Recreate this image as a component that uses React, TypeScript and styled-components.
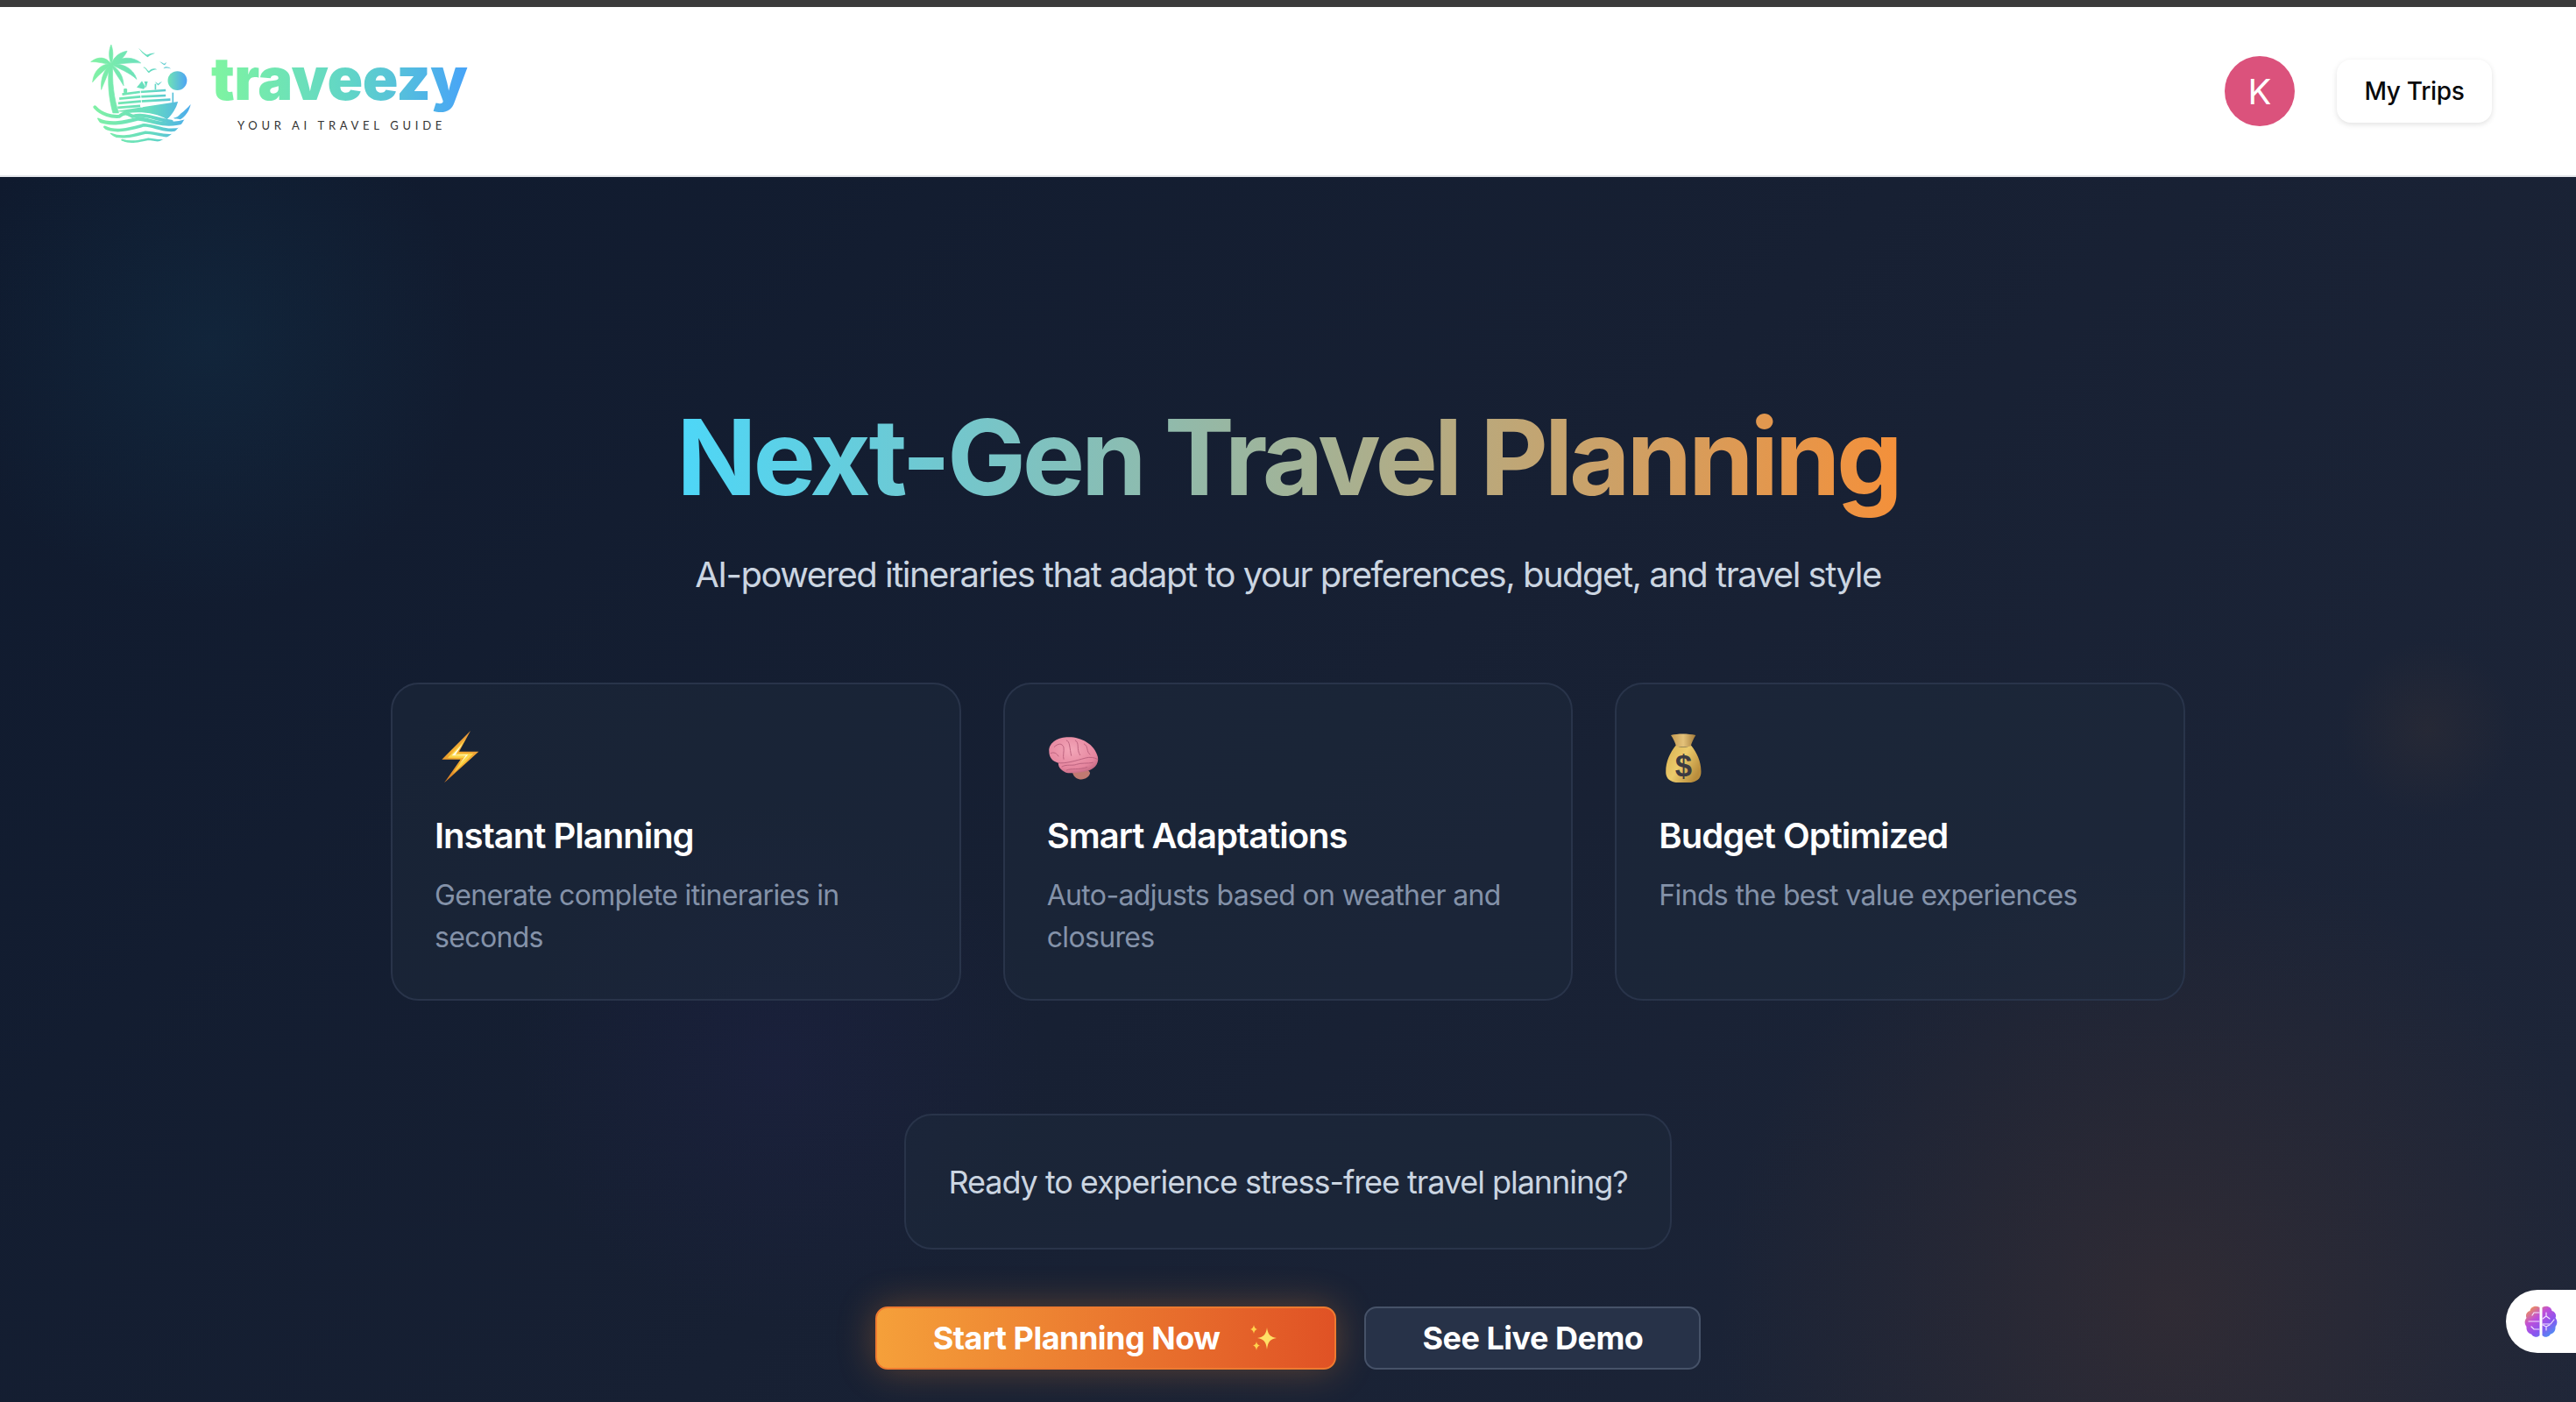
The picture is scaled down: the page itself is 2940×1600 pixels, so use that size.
import styled, { createGlobalStyle } from "styled-components";

const GlobalStyle = createGlobalStyle`
  html, body {
    margin: 0;
    padding: 0;
    background: #0f172a;
  }
  body {
    font-family: "Inter", "Liberation Sans", sans-serif;
  }
  * {
    box-sizing: border-box;
  }
`;

const features = [
  {
    icon: <BoltEmoji />,
    title: "Instant Planning",
    text: "Generate complete itineraries in seconds",
  },
  {
    icon: <BrainEmoji />,
    title: "Smart Adaptations",
    text: "Auto-adjusts based on weather and closures",
  },
  {
    icon: <BagEmoji />,
    title: "Budget Optimized",
    text: "Finds the best value experiences",
  },
];

export default function App() {
  return (
    <>
      <GlobalStyle />
      <Page>
        <TopStrip />
        <Header>
          <Logo>
            <LogoMark />
            <LogoText>
              <Wordmark>traveezy</Wordmark>
              <Tagline>YOUR AI TRAVEL GUIDE</Tagline>
            </LogoText>
          </Logo>
          <HeaderActions>
            <Avatar>K</Avatar>
            <TripsButton type="button">My Trips</TripsButton>
          </HeaderActions>
        </Header>
        <Hero>
          <Title>Next-Gen Travel Planning</Title>
          <Subtitle>
            AI-powered itineraries that adapt to your preferences, budget, and
            travel style
          </Subtitle>
          <FeatureGrid>
            {features.map((f) => (
              <FeatureCard key={f.title}>
                <FeatureIcon>{f.icon}</FeatureIcon>
                <FeatureTitle>{f.title}</FeatureTitle>
                <FeatureText>{f.text}</FeatureText>
              </FeatureCard>
            ))}
          </FeatureGrid>
          <Prompt>Ready to experience stress-free travel planning?</Prompt>
          <Actions>
            <PrimaryButton type="button">
              Start Planning Now
              <Sparkles />
            </PrimaryButton>
            <SecondaryButton type="button">See Live Demo</SecondaryButton>
          </Actions>
          <AssistantTab>
            <CircuitBrain />
          </AssistantTab>
        </Hero>
      </Page>
    </>
  );
}

function LogoMark() {
  return (
    <MarkSvg viewBox="40 30 350 350">
      <defs>
        <linearGradient id="mark" gradientUnits="userSpaceOnUse" x1="60" y1="0" x2="400" y2="0">
          <stop offset="0" stopColor="#7ff0a6" />
          <stop offset="0.55" stopColor="#66dcc0" />
          <stop offset="1" stopColor="#4aa6f2" />
        </linearGradient>
        <linearGradient id="sun" x1="0" y1="0" x2="1" y2="0">
          <stop offset="0" stopColor="#6fe3b4" />
          <stop offset="1" stopColor="#4ea4f4" />
        </linearGradient>
        <clipPath id="seaClip">
          <circle cx="215" cy="205" r="172" />
        </clipPath>
      </defs>
      <g fill="url(#mark)" stroke="url(#mark)" strokeWidth="2">
        <path d="M106 100C98 160 104 220 118 268L138 268C122 220 114 160 118 100Z" />
        <path d="M112 100C102 75 104 50 112 33C120 55 120 80 112 100Z" />
        <path d="M112 100C122 72 145 58 167 55C157 77 137 96 112 100Z" />
        <path d="M112 100C140 74 188 72 214 96C180 92 140 102 112 100Z" />
        <path d="M112 100C148 96 188 112 200 152C175 128 138 116 112 100Z" />
        <path d="M112 100C95 74 68 72 42 92C65 90 90 100 112 100Z" />
        <path d="M112 100C82 96 52 120 48 162C66 138 92 120 112 100Z" />
        <path d="M112 100C92 112 74 145 78 188C90 158 104 128 112 100Z" />
        <path d="M112 100C128 112 154 130 155 174C140 148 122 128 112 100Z" />
      </g>
      <g fill="url(#mark)">
        <path d="M206 44C218 62 232 72 238 76C246 68 258 66 263 62C250 63 240 66 235 68C225 62 215 52 206 44Z" />
        <path d="M222 112C228 104 236 122 242 124C248 116 262 112 270 118C260 118 250 122 242 130C236 128 230 110 222 112Z" />
        <path d="M278 90C284 92 292 98 296 99C298 96 300 95 303 93C300 98 298 102 295 103C290 100 284 96 278 90Z" />
        <path d="M292 115C298 106 308 108 318 116C308 112 300 112 292 115Z" />
        <path d="M262 160C268 164 272 166 274 168C278 164 284 162 288 160C282 166 278 170 274 173C270 170 266 166 262 160Z" />
        <path d="M126 262L342 229C336 252 322 274 304 290C270 268 215 262 170 268C155 262 140 264 126 262Z" />
        <path d="M200 180L218 158L230 178L224 186Z" />
        <path d="M226 160L232 182L238 160Z" />
        <rect x="262" y="168" width="5" height="20" />
        <rect x="322" y="198" width="5" height="36" />
        <rect x="155" y="184" width="12" height="16" rx="4" />
      </g>
      <circle cx="340" cy="157" r="33" fill="url(#sun)" />
      <g fill="none" stroke="url(#mark)" strokeWidth="8">
        <path d="M150 204L210 196L300 190" />
        <path d="M140 219L212 212L300 208" />
        <path d="M136 235L212 228L316 222" />
        <path d="M134 250L212 244" />
      </g>
      <path d="M212 186L218 250" stroke="#ffffff" strokeWidth="3" />
      <path d="M352 270C362 262 376 250 386 238C382 258 368 282 350 290C340 288 332 290 326 286C338 284 346 278 352 270Z" fill="url(#mark)" />
      <g clipPath="url(#seaClip)" fill="none" stroke="url(#mark)" strokeLinecap="round">
        <path d="M56 248C80 275 115 282 140 280C160 262 170 272 185 280C230 268 270 292 320 298" strokeWidth="12" />
        <path d="M68 292C110 312 160 300 205 288C250 290 290 322 372 296" strokeWidth="13" />
        <path d="M90 318C130 338 180 322 225 310C265 310 300 340 360 320" strokeWidth="11" />
        <path d="M112 342C150 358 190 345 230 335C265 335 300 355 340 342" strokeWidth="10" />
        <path d="M150 362C180 372 210 365 240 358C262 360 285 368 310 360" strokeWidth="8" />
      </g>
    </MarkSvg>
  );
}

function BoltEmoji() {
  return (
    <svg viewBox="21 27 180 180" width="60" height="60">
      <defs>
        <linearGradient id="boltEdge" x1="0.8" y1="0" x2="0.1" y2="1">
          <stop offset="0" stopColor="#e8963a" />
          <stop offset="0.5" stopColor="#f5b032" />
          <stop offset="1" stopColor="#d87a24" />
        </linearGradient>
      </defs>
      <path d="M144 30L46 128L110 128L54 208L172 101L105 101Z" fill="url(#boltEdge)" />
      <path d="M128 58L66 122L122 122L84 176L154 108L95 108Z" fill="#fbd648" />
      <path d="M116 76L80 115L128 115L108 142L136 112L92 113Z" fill="#fffbe0" />
    </svg>
  );
}

function BrainEmoji() {
  return (
    <svg viewBox="33 12 180 180" width="60" height="60">
      <defs>
        <radialGradient id="brainFill" cx="0.45" cy="0.35" r="0.75">
          <stop offset="0" stopColor="#f3a6b8" />
          <stop offset="0.7" stopColor="#e5859e" />
          <stop offset="1" stopColor="#b65f78" />
        </radialGradient>
      </defs>
      <path d="M122 150C150 140 178 145 180 160C178 178 150 188 132 176C124 170 118 160 122 150Z" fill="#c17a72" />
      <path d="M40 85C38 60 65 38 100 37C140 33 195 55 207 105C212 130 190 150 170 152C150 158 125 160 105 160C85 155 70 140 72 125C50 120 40 105 40 85Z" fill="url(#brainFill)" />
      <g fill="none" stroke="#bd6480" strokeWidth="3" strokeLinecap="round">
        <path d="M72 125C95 128 130 118 165 108C180 104 195 106 205 112" />
        <path d="M58 70C70 58 85 56 90 72C92 88 86 100 90 112" />
        <path d="M100 48C112 50 110 76 116 100" />
        <path d="M130 48C146 56 132 78 146 98" />
        <path d="M160 60C176 68 166 86 180 96" />
        <path d="M84 138C100 128 120 136 134 130C150 124 170 128 190 124" />
        <path d="M100 150C118 142 140 150 170 140" />
        <path d="M46 92C56 86 66 92 72 102" />
      </g>
    </svg>
  );
}

function BagEmoji() {
  return (
    <svg viewBox="30 12 180 180" width="60" height="60">
      <defs>
        <linearGradient id="bagBody" x1="0" y1="0" x2="1" y2="0.6">
          <stop offset="0" stopColor="#d9b052" />
          <stop offset="0.5" stopColor="#eccb6c" />
          <stop offset="1" stopColor="#b98d3c" />
        </linearGradient>
        <linearGradient id="bagNeck" x1="0" y1="0" x2="1" y2="0">
          <stop offset="0" stopColor="#c49a50" />
          <stop offset="0.5" stopColor="#e4c27a" />
          <stop offset="1" stopColor="#a37a38" />
        </linearGradient>
      </defs>
      <path d="M72 30C95 24 130 24 157 30C150 42 142 56 140 70L90 70C88 56 80 42 72 30Z" fill="url(#bagNeck)" />
      <path d="M88 66C102 72 126 72 142 66C162 92 178 125 175 162C172 186 150 194 115 194C80 194 58 186 55 162C52 125 68 92 88 66Z" fill="url(#bagBody)" />
      <BagDollar x="115" y="172" textAnchor="middle">$</BagDollar>
    </svg>
  );
}

function Sparkles() {
  return (
    <SparkleSvg viewBox="0 0 33 30">
      <path d="M20 3C21 11 24 14 31 15C24 16 21 19 20 28C19 19 16 16 9 15C16 14 19 11 20 3Z" fill="#ffe066" />
      <path d="M5 0C5.500 3 7 4.500 9 5C7 5.500 5.500 7 5 10C4.500 7 3 5.500 1 5C3 4.500 4.500 3 5 0Z" fill="#ffd24d" />
      <path d="M8 19C8.500 22 10 23 12 23.500C10 24 8.500 25.500 8 29C7.500 25.500 6 24 4 23.500C6 23 7.500 22 8 19Z" fill="#ffd24d" />
    </SparkleSvg>
  );
}

function CircuitBrain() {
  return (
    <svg viewBox="0 0 38 38" width="38" height="38">
      <defs>
        <linearGradient id="chip" x1="0.1" y1="0" x2="0.9" y2="1">
          <stop offset="0" stopColor="#f59e42" />
          <stop offset="0.35" stopColor="#c04fd8" />
          <stop offset="0.65" stopColor="#8a55ef" />
          <stop offset="1" stopColor="#3f9cf5" />
        </linearGradient>
      </defs>
      <path
        d="M17.500 3C12 0 7 3 6.500 7C2.500 8 1 12 2.500 15C0 18 0 22 2.500 25C2 30 5 33 8 33.500C10 37 15 38 17.500 35ZM20.500 3C26 0 31 3 31.500 7C35.500 8 37 12 35.500 15C38 18 38 22 35.500 25C36 30 33 33 30 33.500C28 37 23 38 20.500 35Z"
        fill="url(#chip)"
      />
      <g fill="none" stroke="#f4e6ff" strokeWidth="1.200" strokeLinecap="round">
        <path d="M17 9L11 9L9 12" />
        <path d="M17 19L5 19" />
        <path d="M17 28L11 28L8 25" />
        <path d="M25 9L25 13L21 16M25 13L29 16" />
        <path d="M21 22L30 22L34 17" />
        <path d="M25 29L25 25L21 23M25 25L29 23" />
      </g>
    </svg>
  );
}

const Page = styled.div`
  display: flex;
  flex-direction: column;
  height: 1600px;
  overflow: hidden;
`;

const TopStrip = styled.div`
  height: 8px;
  background: #3b3b3b;
`;

const Header = styled.header`
  height: 194px;
  flex-shrink: 0;
  display: flex;
  align-items: center;
  justify-content: space-between;
  padding: 0 96px 0 103px;
  background: #ffffff;
  border-bottom: 2px solid #e5e7eb;
`;

const Logo = styled.div`
  display: flex;
  align-items: flex-start;
  gap: 22px;
  margin-top: 7px;
`;

const MarkSvg = styled.svg`
  width: 116px;
  height: 116px;
  flex-shrink: 0;
`;

const LogoText = styled.div`
  display: flex;
  flex-direction: column;
  align-items: flex-start;
`;

const Wordmark = styled.div`
  font-family: "Inter", sans-serif;
  font-size: 67px;
  font-weight: 900;
  line-height: 80px;
  height: 86px;
  letter-spacing: -0.4px;
  background: linear-gradient(90deg, #7ff5a0 0%, #60d4c8 55%, #47a3f8 100%);
  background-clip: text;
  -webkit-background-clip: text;
  color: transparent;
`;

const Tagline = styled.div`
  margin-top: -1px;
  padding-left: 30px;
  font-family: "Lato", sans-serif;
  font-size: 13px;
  font-weight: 400;
  line-height: 16px;
  letter-spacing: 4.700px;
  color: #333333;
  white-space: nowrap;
`;

const HeaderActions = styled.div`
  display: flex;
  align-items: center;
  gap: 48px;
`;

const Avatar = styled.div`
  width: 80px;
  height: 80px;
  border-radius: 50%;
  display: flex;
  align-items: center;
  justify-content: center;
  background: #db527c;
  color: #ffffff;
  font-size: 40px;
`;

const TripsButton = styled.button`
  height: 72px;
  width: 177px;
  border: none;
  border-radius: 16px;
  background: #ffffff;
  color: #09090b;
  font-family: "Inter", sans-serif;
  font-size: 28px;
  font-weight: 500;
  letter-spacing: -0.3px;
  box-shadow: 0 2px 6px rgba(0, 0, 0, 0.12);
`;

const Hero = styled.main`
  position: relative;
  flex: 1;
  display: flex;
  flex-direction: column;
  align-items: center;
  padding-top: 260px;
  background:
    radial-gradient(circle 300px at 240px 190px, rgba(20, 75, 105, 0.2), transparent 100%),
    radial-gradient(circle 100px at 2770px 630px, rgba(110, 75, 50, 0.13), transparent 100%),
    radial-gradient(circle 300px at 890px 1010px, rgba(55, 40, 120, 0.12), transparent 100%),
    radial-gradient(circle 520px at 2480px 1290px, rgba(125, 70, 40, 0.2), transparent 100%),
    linear-gradient(135deg, #0f1a2e 0%, #172033 50%, #1e2639 100%);
`;

const Title = styled.h1`
  margin: 0;
  font-size: 120px;
  font-weight: 700;
  line-height: 120px;
  letter-spacing: -4.250px;
  white-space: nowrap;
  background: linear-gradient(90deg, #4dd7f8 0%, #f4903a 100%);
  background-clip: text;
  -webkit-background-clip: text;
  color: transparent;
  padding-bottom: 10px;
`;

const Subtitle = styled.p`
  margin: 34px 0 0;
  font-size: 40px;
  font-weight: 400;
  line-height: 60px;
  letter-spacing: -1.500px;
  color: #cbd5e1;
  white-space: nowrap;
`;

const FeatureGrid = styled.div`
  display: grid;
  grid-template-columns: repeat(3, 1fr);
  gap: 48px;
  width: 2048px;
  margin-top: 93px;
`;

const FeatureCard = styled.section`
  height: 363px;
  padding: 48px;
  border: 2px solid #29344a;
  border-radius: 32px;
  background: rgba(30, 41, 59, 0.5);
`;

const FeatureIcon = styled.div`
  height: 97px;
  padding-top: 4px;
`;

const FeatureTitle = styled.h3`
  margin: 0 0 16px;
  font-size: 40px;
  font-weight: 600;
  line-height: 56px;
  letter-spacing: -1px;
  color: #ffffff;
`;

const FeatureText = styled.p`
  margin: 0;
  font-size: 32px;
  font-weight: 400;
  line-height: 48px;
  letter-spacing: -0.650px;
  color: #8492a9;
`;

const BagDollar = styled.text`
  font-family: "Liberation Sans", sans-serif;
  font-size: 104px;
  font-weight: 700;
  fill: #3c3a42;
`;

const Prompt = styled.div`
  margin-top: 129px;
  padding: 50px 48px;
  height: 155px;
  border: 2px solid #29344a;
  border-radius: 32px;
  background: rgba(30, 41, 59, 0.5);
  color: #cbd5e1;
  font-size: 36px;
  font-weight: 400;
  line-height: 52px;
  letter-spacing: -1.050px;
  white-space: nowrap;
`;

const Actions = styled.div`
  display: flex;
  gap: 32px;
  margin-top: 65px;
`;

const PrimaryButton = styled.button`
  display: flex;
  align-items: center;
  gap: 34px;
  height: 72px;
  padding: 0 64px;
  border: 2px solid #ee7a30;
  border-radius: 14px;
  background: linear-gradient(90deg, #f5a03a 0%, #e05225 100%);
  color: #ffffff;
  font-family: "Inter", sans-serif;
  font-size: 36px;
  font-weight: 700;
  letter-spacing: -0.500px;
  white-space: nowrap;
  box-shadow: 0 0 44px rgba(245, 140, 50, 0.32);
`;

const SparkleSvg = styled.svg`
  width: 33px;
  height: 30px;
`;

const SecondaryButton = styled.button`
  height: 72px;
  padding: 0 64px;
  border: 2px solid #465268;
  border-radius: 14px;
  background: #273248;
  color: #ffffff;
  font-family: "Inter", sans-serif;
  font-size: 36px;
  font-weight: 700;
  letter-spacing: -0.500px;
  white-space: nowrap;
`;

const AssistantTab = styled.div`
  position: absolute;
  right: 0;
  top: 1270px;
  width: 80px;
  height: 72px;
  display: flex;
  align-items: center;
  padding-left: 21px;
  border-radius: 36px 0 0 36px;
  background: #ffffff;
`;
